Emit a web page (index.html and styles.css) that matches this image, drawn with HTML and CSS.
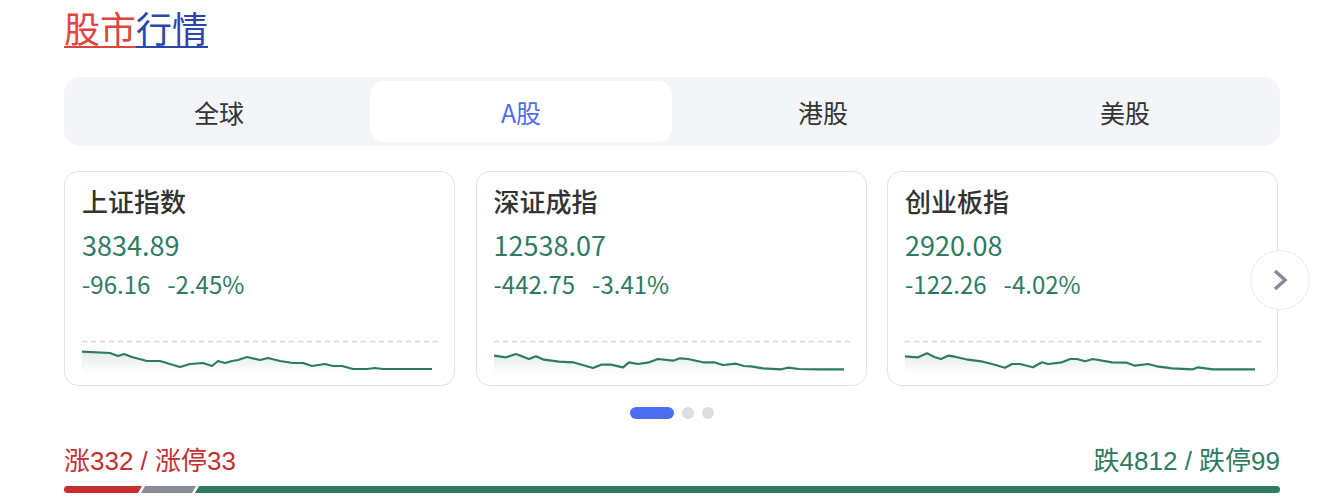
FILE: index.html
```html
<!DOCTYPE html>
<html lang="zh-CN">
<head>
<meta charset="utf-8">
<title>股市行情</title>
<link rel="stylesheet" href="styles.css">
</head>
<body>
<div class="page">
  <h1 class="title"><span class="t-red">股市</span><span class="t-blue">行情</span></h1>

  <div class="tabs">
    <div class="tab">全球</div>
    <div class="tab active">A股</div>
    <div class="tab">港股</div>
    <div class="tab">美股</div>
  </div>

  <div class="carousel">
    <div class="cards">
      <div class="card">
        <div class="card-name">上证指数</div>
        <div class="card-value">3834.89</div>
        <div class="card-change"><span>-96.16</span><span>-2.45%</span></div>
        <svg class="chart" viewBox="0 0 356 35" width="356" height="35">
          <defs>
            <linearGradient id="g1" x1="0" y1="0" x2="0" y2="1">
              <stop offset="0" stop-color="#2f7a62" stop-opacity="0.14"/>
              <stop offset="1" stop-color="#2f7a62" stop-opacity="0"/>
            </linearGradient>
          </defs>
          <line x1="0" y1="2.5" x2="356" y2="2.5" class="dash"/>
          <polygon fill="url(#g1)" points="0,12.7 28,14 36,17 42,15 50,18 65,22 78,22 98,28 108,25 121,24 130,27 136,22 143,24 150,22 156,21 165,18 178,21 186,19 198,22 211,24 221,24 230,27 243,25 251,27 260,27 271,30 285,30 293,29 301,30 321,30 350,30 350,35 0,35"/>
          <polyline class="line" points="0,12.7 28,14 36,17 42,15 50,18 65,22 78,22 98,28 108,25 121,24 130,27 136,22 143,24 150,22 156,21 165,18 178,21 186,19 198,22 211,24 221,24 230,27 243,25 251,27 260,27 271,30 285,30 293,29 301,30 321,30 350,30"/>
        </svg>
      </div>
      <div class="card">
        <div class="card-name">深证成指</div>
        <div class="card-value">12538.07</div>
        <div class="card-change"><span>-442.75</span><span>-3.41%</span></div>
        <svg class="chart" viewBox="0 0 356 35" width="356" height="35">
          <defs>
            <linearGradient id="g2" x1="0" y1="0" x2="0" y2="1">
              <stop offset="0" stop-color="#2f7a62" stop-opacity="0.14"/>
              <stop offset="1" stop-color="#2f7a62" stop-opacity="0"/>
            </linearGradient>
          </defs>
          <line x1="0" y1="2.5" x2="356" y2="2.5" class="dash"/>
          <polygon fill="url(#g2)" points="0,16.7 12,18.3 22,15 35,20 42,17.3 50,20.7 65,22.7 79,23.3 99,29 107,25.7 117,25.7 129,28.3 135,23.3 144,25 155,23.3 164,20 179,21.7 186,19.3 194,20 209,23.3 220,23.3 229,26 242,24.7 250,27 257,27.3 269,29.3 287,30.3 294,28.7 305,30 325,30.3 350,30.3 350,35 0,35"/>
          <polyline class="line" points="0,16.7 12,18.3 22,15 35,20 42,17.3 50,20.7 65,22.7 79,23.3 99,29 107,25.7 117,25.7 129,28.3 135,23.3 144,25 155,23.3 164,20 179,21.7 186,19.3 194,20 209,23.3 220,23.3 229,26 242,24.7 250,27 257,27.3 269,29.3 287,30.3 294,28.7 305,30 325,30.3 350,30.3"/>
        </svg>
      </div>
      <div class="card">
        <div class="card-name">创业板指</div>
        <div class="card-value">2920.08</div>
        <div class="card-change"><span>-122.26</span><span>-4.02%</span></div>
        <svg class="chart" viewBox="0 0 356 35" width="356" height="35">
          <defs>
            <linearGradient id="g3" x1="0" y1="0" x2="0" y2="1">
              <stop offset="0" stop-color="#2f7a62" stop-opacity="0.14"/>
              <stop offset="1" stop-color="#2f7a62" stop-opacity="0"/>
            </linearGradient>
          </defs>
          <line x1="0" y1="2.5" x2="356" y2="2.5" class="dash"/>
          <polygon fill="url(#g3)" points="0,17.3 13,18.3 22,14.3 30,18.3 36,20 43,16.7 50,17.7 63,20.7 78,22.7 87,25 100,28.7 107,25 115,25 128,28.3 137,23.3 143,25 157,23.3 165,20 172,20 180,22.3 188,20 207,23.3 222,23.7 230,26.7 243,25 252,27.3 267,29.3 288,30.3 293,28.3 308,30.3 350,30.3 350,35 0,35"/>
          <polyline class="line" points="0,17.3 13,18.3 22,14.3 30,18.3 36,20 43,16.7 50,17.7 63,20.7 78,22.7 87,25 100,28.7 107,25 115,25 128,28.3 137,23.3 143,25 157,23.3 165,20 172,20 180,22.3 188,20 207,23.3 222,23.7 230,26.7 243,25 252,27.3 267,29.3 288,30.3 293,28.3 308,30.3 350,30.3"/>
        </svg>
      </div>
    </div>
    <button class="next" aria-label="下一页">
      <svg viewBox="0 0 24 24" width="24" height="24"><polyline points="7,3 17,12 7,21" fill="none" stroke="#8a8d99" stroke-width="3.6" stroke-linecap="butt" stroke-linejoin="miter"/></svg>
    </button>
  </div>

  <div class="dots">
    <span class="dot active"></span>
    <span class="dot"></span>
    <span class="dot"></span>
  </div>

  <div class="stats">
    <span class="up">涨332 / 涨停33</span>
    <span class="down">跌4812 / 跌停99</span>
  </div>
  <div class="bar">
    <div class="seg seg-up" style="width:78px"></div>
    <div class="seg seg-flat" style="width:55px"></div>
    <div class="seg seg-down"></div>
  </div>
</div>
</body>
</html>
```

FILE: styles.css
```css
* { box-sizing: border-box; }

html, body {
  margin: 0;
  padding: 0;
  background: #ffffff;
}

body {
  font-family: "Noto Sans CJK SC", "Noto Sans", sans-serif;
  color: #333333;
}

.page {
  width: 1216px;
  margin-left: 64px;
  padding-top: 8px;
}

.title {
  margin: 0;
  font-size: 36px;
  line-height: 38px;
  font-weight: 400;
  display: flex;
}

.title span {
  border-bottom: 2px solid currentColor;
}

.t-red { color: #e0443b; }
.t-blue { color: #2a45b0; }

.tabs {
  margin-top: 29px;
  height: 69px;
  padding: 4px;
  background: #f4f5f9;
  border-radius: 16px;
  display: grid;
  grid-template-columns: repeat(4, 1fr);
}

.tab {
  display: flex;
  align-items: center;
  justify-content: center;
  font-size: 25px;
  color: #333333;
  border-radius: 14px;
}

.tab.active {
  background: #ffffff;
  color: #4e6ef2;
}

.carousel {
  position: relative;
  margin-top: 25px;
}

.cards {
  display: grid;
  grid-template-columns: repeat(3, 391px);
  column-gap: 20.5px;
}

.card {
  height: 215px;
  border: 1px solid #e2e2e6;
  border-radius: 14px;
  padding: 12px 17px 11px;
  display: flex;
  flex-direction: column;
}

.card-name {
  font-size: 26px;
  line-height: 34px;
  font-weight: 500;
  color: #333333;
}

.card-value {
  margin-top: 10px;
  font-size: 27px;
  line-height: 34px;
  color: #2f7a62;
}

.card-change {
  margin-top: 5px;
  font-size: 24px;
  line-height: 34px;
  color: #2f7a62;
  display: flex;
  gap: 17px;
}

.chart {
  margin-top: auto;
  display: block;
}

.chart .dash {
  stroke: #d6d6d9;
  stroke-width: 1.5;
  stroke-dasharray: 5 4;
}

.chart .line {
  fill: none;
  stroke: #2f7a62;
  stroke-width: 2.2;
  stroke-linejoin: round;
}

.next {
  position: absolute;
  left: 1186px;
  top: 79px;
  width: 60px;
  height: 60px;
  border-radius: 50%;
  border: 1px solid #ececef;
  background: rgba(255, 255, 255, 0.85);
  padding: 0;
  display: flex;
  align-items: center;
  justify-content: center;
}

.dots {
  margin-top: 21px;
  height: 12px;
  display: flex;
  justify-content: center;
  gap: 8px;
}

.dot {
  width: 12px;
  height: 12px;
  border-radius: 6px;
  background: #dcdde2;
}

.dot.active {
  width: 44px;
  background: #4e6ef2;
}

.stats {
  margin-top: 26px;
  display: flex;
  justify-content: space-between;
  font-family: "Liberation Sans", "Noto Sans CJK SC", sans-serif;
  font-size: 26px;
  line-height: 32px;
}

.up { color: #c62f2f; }
.down { color: #2f7a62; }

.bar {
  margin-top: 9px;
  height: 7px;
  display: flex;
  border-radius: 4px;
  overflow: hidden;
}

.seg {
  height: 100%;
}

.seg + .seg {
  margin-left: -1px;
}

.seg-up {
  background: #c62f2f;
  clip-path: polygon(0 0, 100% 0, calc(100% - 4px) 100%, 0 100%);
}

.seg-flat {
  background: #8a8c94;
  clip-path: polygon(4px 0, 100% 0, calc(100% - 4px) 100%, 0 100%);
}

.seg-down {
  flex: 1;
  background: #2f7a62;
  clip-path: polygon(4px 0, 100% 0, 100% 100%, 0 100%);
}
```
